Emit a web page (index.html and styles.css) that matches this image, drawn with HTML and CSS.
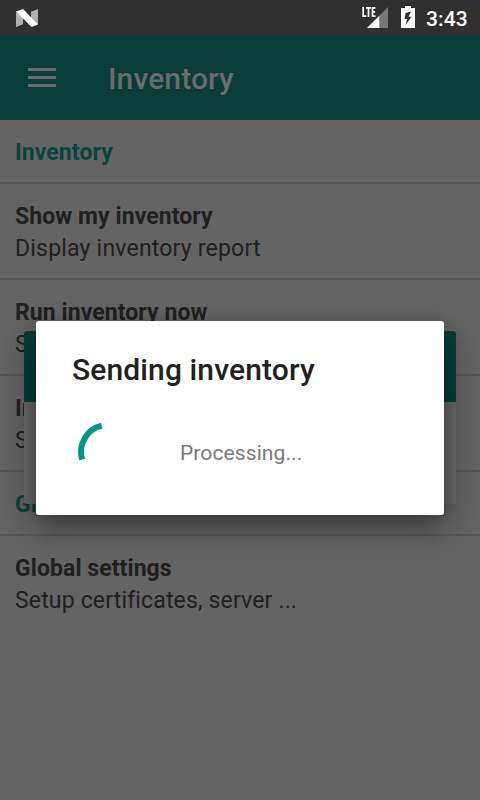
FILE: index.html
```html
<!DOCTYPE html>
<html lang="en">
<head>
<meta charset="utf-8">
<title>Inventory</title>
<link rel="stylesheet" href="styles.css">
</head>
<body>
<div class="screen">
  <header class="status">
    <svg class="logo" width="22" height="18" viewBox="0 0 22 18"><path fill="#b0b0b0" d="M0 2.500L7 8v7.300L0 18zM22 0v15.500L15 10V2.700z"/><path fill="#fff" d="M0 2.500L7 0l15 15.500L15.500 18z"/></svg>
    <svg class="signal" width="27" height="22" viewBox="0 0 27 22"><path fill="#777" d="M26 1v21H5z"/><path fill="#fff" d="M17.300 9.700V22H5z"/><path fill="none" stroke="#fff" stroke-width="1.700" d="M1.200 1v9.200H4.300M4 1.900h5M6.500 2v9M13.500 1.900h-3v8.300h3M10.500 5.800h2.600"/></svg>
    <svg class="battery" width="14" height="22" viewBox="0 0 14 22"><path fill="#fff" d="M4 0h6v2h4v20H0V2h4z"/><path fill="#303030" d="M10 5.500L4.600 7 3.500 13h2.700L4.500 19.300l6-8.500H7.500z"/></svg>
    <span class="clock">3:43</span>
  </header>
  <nav class="toolbar">
    <span class="menu"><i></i><i></i><i></i></span>
    <h1>Inventory</h1>
  </nav>
  <main>
    <h2>Inventory</h2>
    <section class="row"><b>Show my inventory</b><span>Display inventory report</span></section>
    <section class="row"><b>Run inventory now</b><span>S</span></section>
    <section class="row"><b>In</b><span>S</span></section>
    <h2>Global</h2>
    <section class="row last"><b>Global settings</b><span class="wide">Setup certificates, server ...</span></section>
  </main>
  <div class="back-dialog"></div>
  <div class="dialog">
    <h3>Sending inventory</h3>
    <div class="progress">
      <svg width="72" height="72" viewBox="0 0 72 72"><path fill="none" stroke="#009688" stroke-width="6" d="M29.700 9.700A27 27 0 0 0 10.100 43.600"/></svg>
      <span>Processing...</span>
    </div>
  </div>
</div>
</body>
</html>
```
FILE: styles.css
```css
* { box-sizing: border-box; }
body { margin: 0; font-family: Roboto, sans-serif; }
h1, h2, h3 { margin: 0; }
.screen { position: relative; width: 480px; height: 800px; overflow: hidden; background: #646464; color: #202020; }
.status { height: 36px; background: #303030; display: flex; align-items: flex-start; padding: 0 12px 0 16px; }
.logo { margin-top: 9px; }
.signal { margin: 6px 12px 0 auto; }
.battery { margin: 6px 11px 0 0; }
.clock { color: #fff; font-size: 21px; font-weight: 500; line-height: 36px; padding-top: 1px; width: 42px; letter-spacing: .1px; white-space: nowrap; }
.toolbar { height: 84px; background: #093d37; display: flex; align-items: center; padding-left: 28px; }
.menu { display: flex; flex-direction: column; gap: 5px; width: 28px; margin: 0 52px 1px 0; }
.menu i { height: 3px; background: #6b6b6b; }
h1 { color: #6b6b6b; font-size: 30px; font-weight: 500; line-height: 36px; padding-top: 1px; letter-spacing: .1px; }
h2 { height: 64px; border-bottom: 2px solid #555; padding: 17px 15px 0; color: #09443d; font-size: 23px; font-weight: 700; line-height: 32px; letter-spacing: .08px; }
.row { height: 96px; border-bottom: 2px solid #555; padding: 17px 15px 0; display: flex; flex-direction: column; font-size: 23px; line-height: 32px; }
.row b { letter-spacing: .08px; }
.row span { letter-spacing: .2px; }
.row .wide { letter-spacing: .16px; }
.row.last { border-bottom: 0; }
.back-dialog { position: absolute; left: 24px; top: 331px; width: 432px; height: 173px; border-radius: 3px; background: linear-gradient(#093d37 71px, #646464 71px); box-shadow: 0 8px 24px rgba(0,0,0,.14); }
.dialog { position: absolute; left: 36px; top: 321px; width: 408px; height: 194px; border-radius: 3px; background: #fff; box-shadow: 0 14px 30px rgba(0,0,0,.38), 0 0 12px rgba(0,0,0,.12); padding: 30px 36px; }
h3 { color: #212121; font-size: 30px; font-weight: 500; line-height: 38px; letter-spacing: .12px; white-space: nowrap; }
.progress { display: flex; align-items: center; gap: 36px; margin-top: 27px; }
.progress span { color: #7a7a7a; font-size: 21px; line-height: 24px; padding-top: 2px; letter-spacing: .1px; }
```
